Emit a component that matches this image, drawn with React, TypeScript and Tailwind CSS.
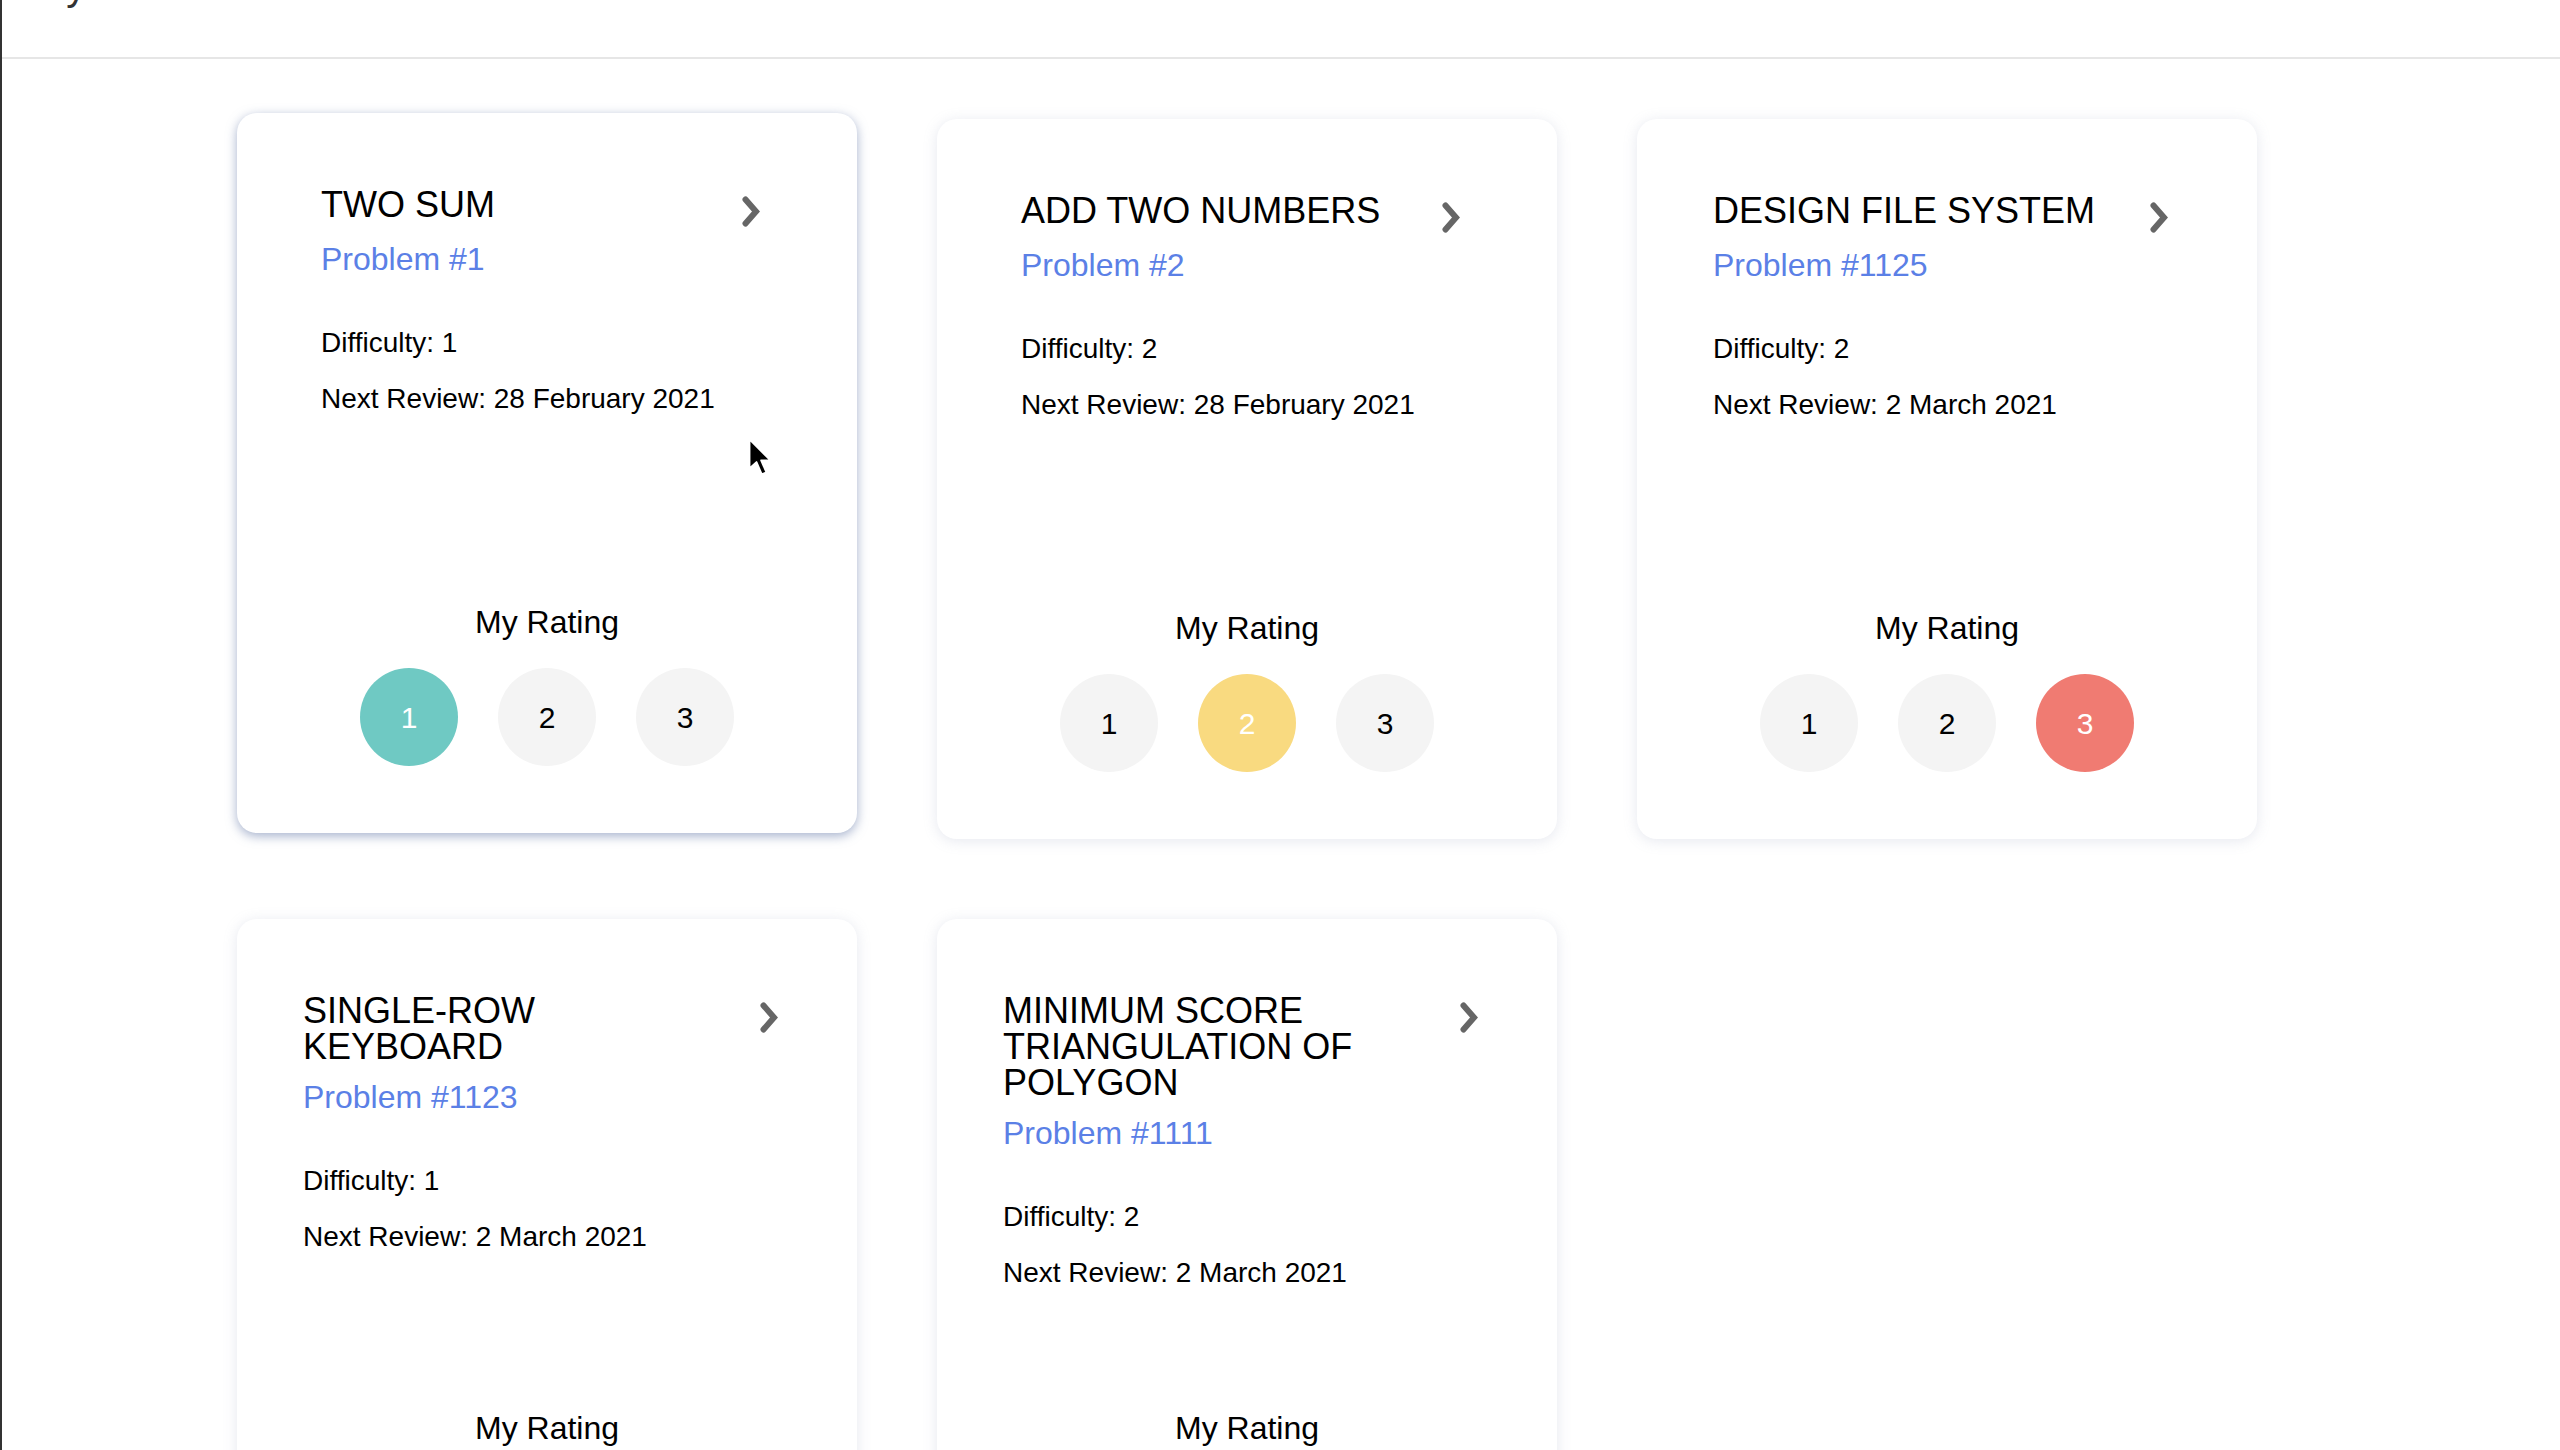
import { ReactNode } from "react";

type Problem = {
  title: string;
  number: number;
  difficulty: number;
  nextReview: string;
  rating: number;
};

const problems: Problem[] = [
  { title: "Two Sum", number: 1, difficulty: 1, nextReview: "28 February 2021", rating: 1 },
  { title: "Add Two Numbers", number: 2, difficulty: 2, nextReview: "28 February 2021", rating: 2 },
  { title: "Design File System", number: 1125, difficulty: 2, nextReview: "2 March 2021", rating: 3 },
  { title: "Single-Row Keyboard", number: 1123, difficulty: 1, nextReview: "2 March 2021", rating: 0 },
  { title: "Minimum Score Triangulation of Polygon", number: 1111, difficulty: 2, nextReview: "2 March 2021", rating: 0 },
];

const activeColor: Record<number, string> = {
  1: "bg-[#6fc9c3] text-white",
  2: "bg-[#f9da80] text-white",
  3: "bg-[#f07b72] text-white",
};

function Chevron() {
  return (
    <svg viewBox="0 0 18 31" className="w-[18px] h-[31px] ml-[55px] mt-[9px] shrink-0">
      <polyline
        points="3.5,3.5 14,15.5 3.5,27.5"
        fill="none"
        stroke="#666"
        strokeWidth="6"
        strokeLinecap="round"
        strokeLinejoin="miter"
      />
    </svg>
  );
}

function RatingButton({ value, active }: { value: number; active: boolean }) {
  return (
    <div
      className={
        "w-[98px] h-[98px] rounded-full flex items-center justify-center text-[30px] " +
        (active ? activeColor[value] : "bg-[#f4f4f4] text-black")
      }
    >
      {value}
    </div>
  );
}

function Card({ p, hovered }: { p: Problem; hovered?: boolean }) {
  return (
    <div
      className={
        "w-[620px] h-[720px] rounded-[20px] bg-white flex flex-col justify-between pt-[74px] pb-[67px] " +
        (hovered
          ? "-translate-y-[6px] shadow-[0_3px_11px_rgba(105,125,170,0.6)]"
          : "shadow-[0_2px_14px_rgba(140,150,180,0.22)]")
      }
    >
      <div className="pl-[40px] pr-[53px]">
        <div className="w-fit min-w-[439px] mx-auto">
          <div className="flex items-start justify-between">
            <h2 className="max-w-[402px] text-[36px] leading-none uppercase text-black">{p.title}</h2>
            <Chevron />
          </div>
          <p className="mt-[14px] text-[32px] leading-[36px] text-[#5b80e6]">Problem #{p.number}</p>
          <p className="mt-[50px] text-[28px] leading-[32px] text-black">Difficulty: {p.difficulty}</p>
          <p className="mt-[24px] text-[28px] leading-[32px] text-black">Next Review: {p.nextReview}</p>
        </div>
      </div>
      <div className="flex flex-col items-center">
        <p className="text-[32px] leading-[36px] text-black">My Rating</p>
        <div className="flex gap-[40px] mt-[28px]">
          {[1, 2, 3].map((v) => (
            <RatingButton key={v} value={v} active={p.rating === v} />
          ))}
        </div>
      </div>
    </div>
  );
}

function Cursor(): ReactNode {
  return (
    <svg viewBox="0 0 24 36" className="absolute left-[744px] top-[437px] w-[28px] h-[42px]">
      <path
        d="M3 2 L3 27 L9 21.5 L13.5 32 L17.5 30.3 L13 20 L21 20 Z"
        fill="#000"
        stroke="#fff"
        strokeWidth="1.6"
        strokeLinejoin="round"
      />
    </svg>
  );
}

export default function App() {
  return (
    <div className="relative min-h-screen bg-white border-l-2 border-[#333] font-['Liberation_Sans',Arial,sans-serif]">
      <header className="h-[59px] border-b-2 border-[#e6e6e6] overflow-hidden">
        <h1 className="-mt-[34px] pl-[31px] text-[40px] leading-none text-[#333]">My Problems</h1>
      </header>
      <main className="pl-[235px] pt-[60px]">
        <div className="grid grid-cols-[repeat(3,620px)] gap-x-[80px] gap-y-[80px]">
          {problems.map((p, i) => (
            <Card key={p.number} p={p} hovered={i === 0} />
          ))}
        </div>
      </main>
      <Cursor />
    </div>
  );
}
